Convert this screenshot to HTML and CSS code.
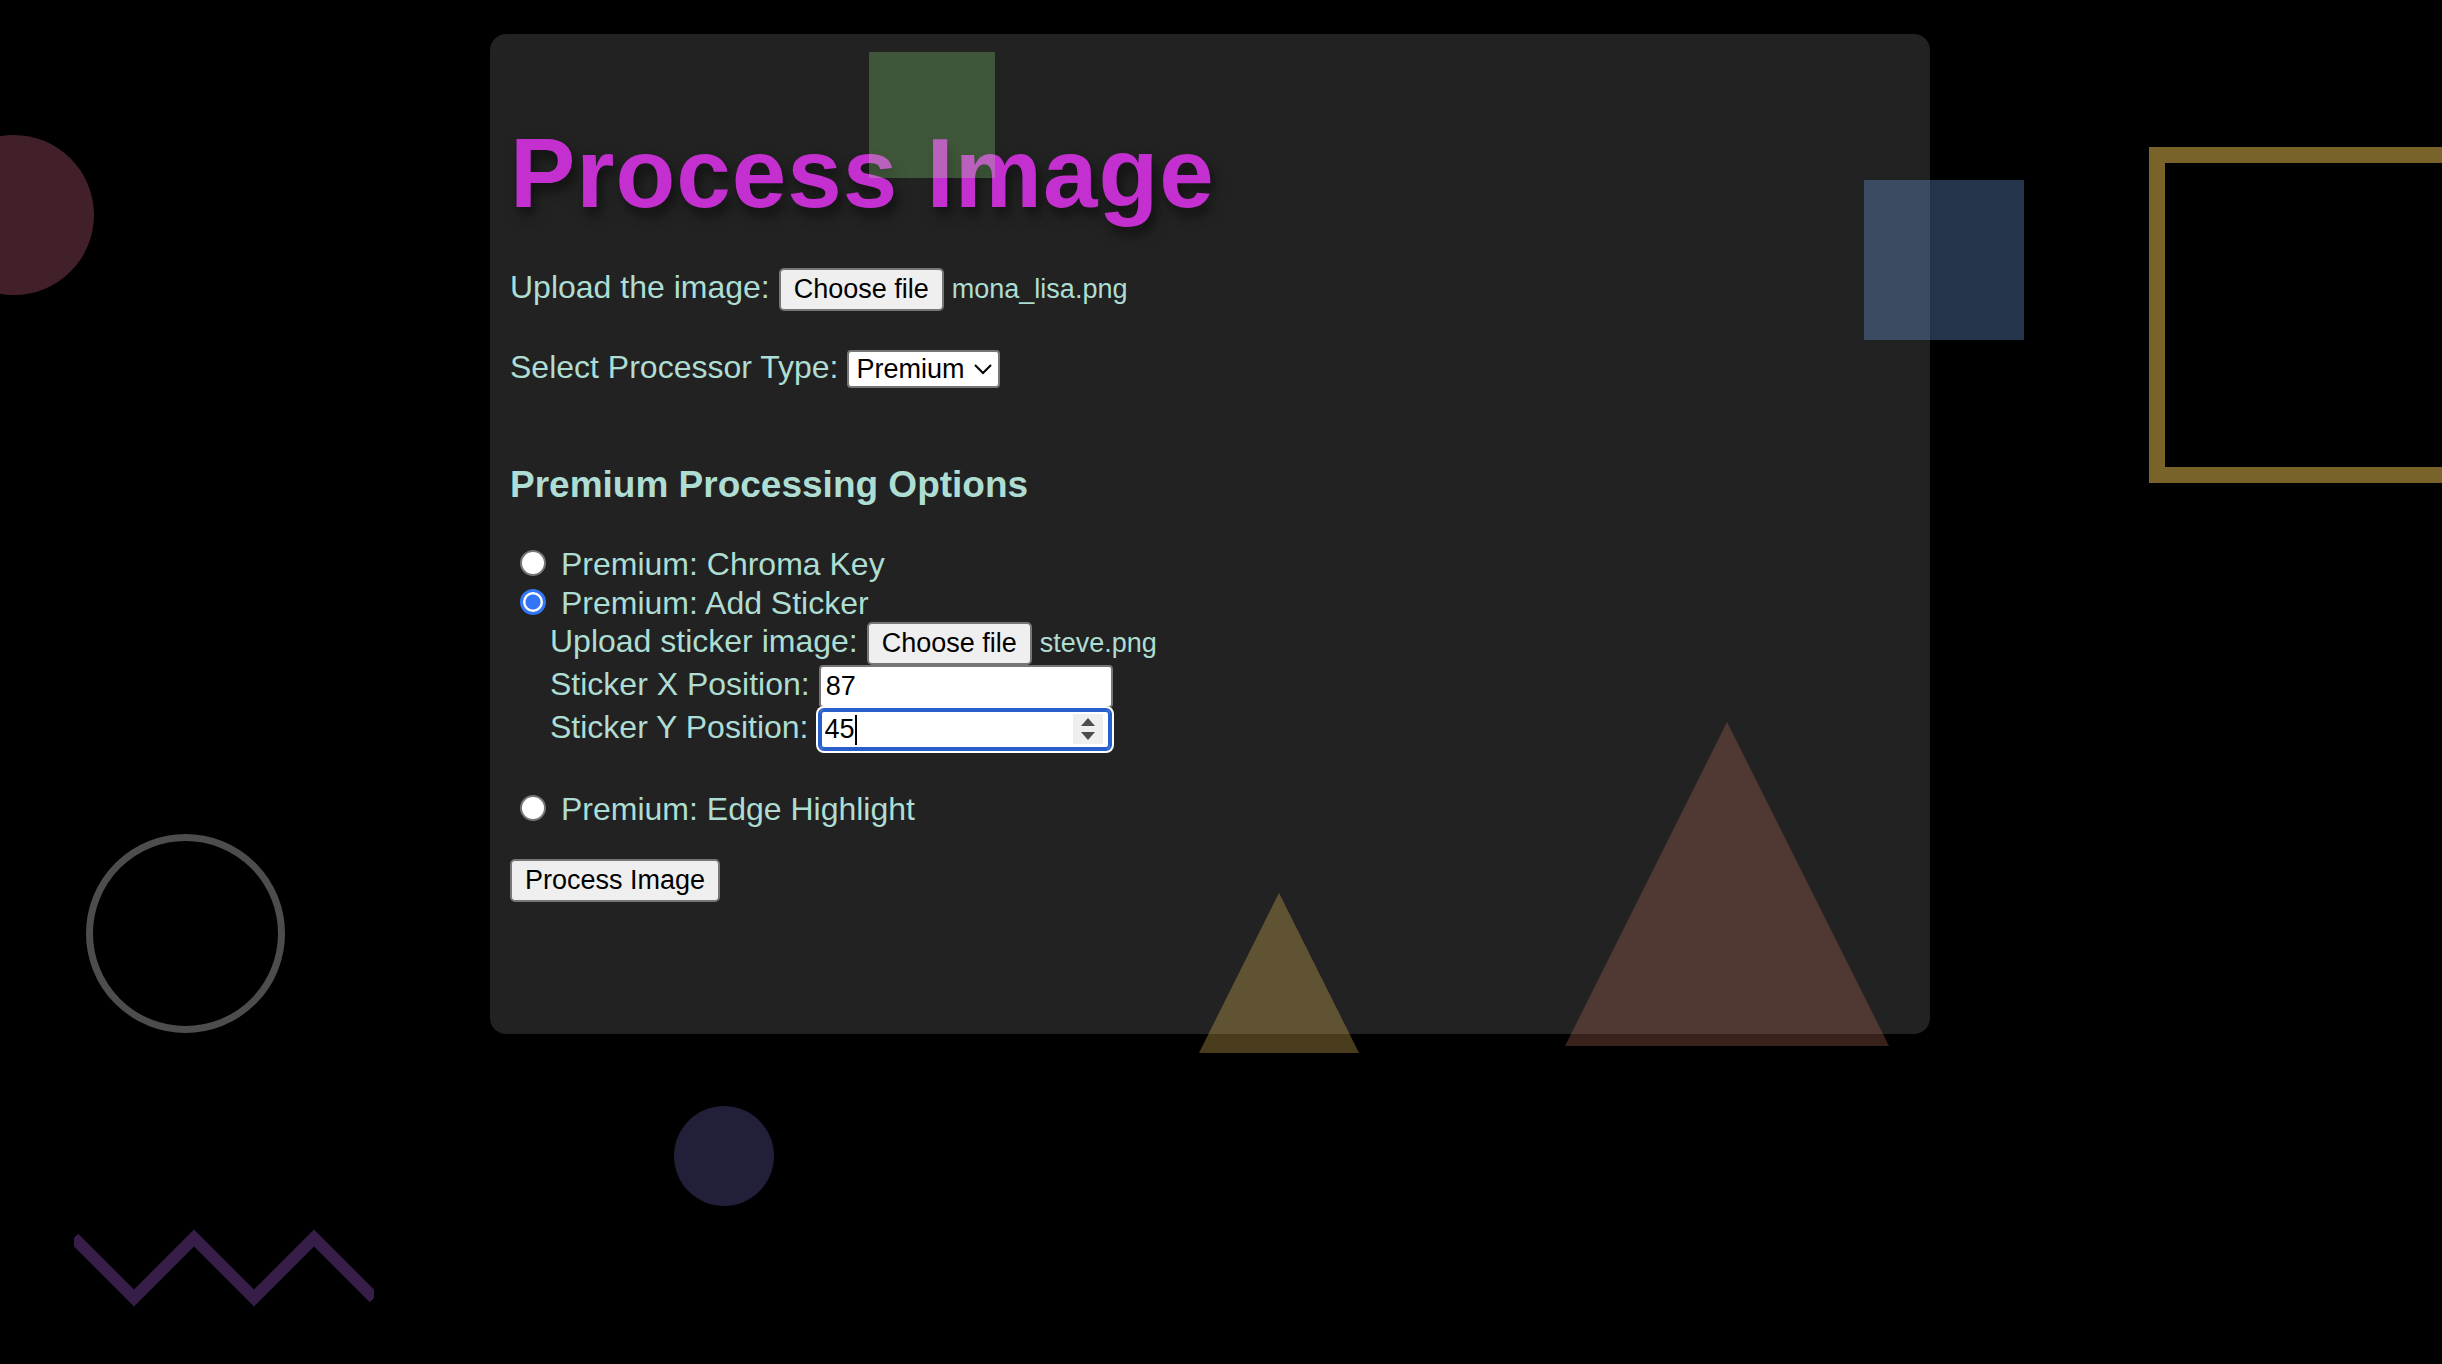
FILE: index.html
```html
<!DOCTYPE html>
<html lang="en-GB">
<head>
  <meta charset="utf-8">
  <title>Process Image</title>
  <meta name="viewport" content="width=device-width, initial-scale=1">
  <link rel="stylesheet" href="styles.css">
</head>
<body>
  <main class="card">
    <h1 class="title">Process Image</h1>
    <form class="form">
      <div class="row row-upload">
        <label for="image">Upload the image:</label>
        <span class="file">
          <span class="button">Choose file</span>
          <span class="file-name">mona_lisa.png</span>
          <input class="file-input" type="file" id="image" name="image" accept="image/*">
        </span>
      </div>

      <div class="row row-type">
        <label for="type">Select Processor Type:</label>
        <select class="select" id="type" name="type">
          <option>Basic</option>
          <option selected>Premium</option>
        </select>
      </div>

      <h3 class="subtitle">Premium Processing Options</h3>

      <div class="option">
        <input class="radio" type="radio" id="chroma" name="option">
        <label for="chroma">Premium: Chroma Key</label>
      </div>
      <div class="option">
        <input class="radio" type="radio" id="sticker" name="option" checked>
        <label for="sticker">Premium: Add Sticker</label>
      </div>

      <div class="sticker">
        <div class="row">
          <label for="sticker-image">Upload sticker image:</label>
          <span class="file">
            <span class="button">Choose file</span>
            <span class="file-name">steve.png</span>
            <input class="file-input" type="file" id="sticker-image" name="sticker-image" accept="image/*">
          </span>
        </div>
        <div class="row">
          <label for="sticker-x">Sticker X Position:</label>
          <input class="number" type="number" id="sticker-x" name="sticker-x" value="87">
        </div>
        <div class="row">
          <label for="sticker-y">Sticker Y Position:</label>
          <input class="number number-active" type="number" id="sticker-y" name="sticker-y" value="45">
        </div>
      </div>

      <div class="option">
        <input class="radio" type="radio" id="edge" name="option">
        <label for="edge">Premium: Edge Highlight</label>
      </div>

      <button class="button submit" type="submit">Process Image</button>
    </form>
  </main>

  <div class="shapes" aria-hidden="true">
    <div class="shape circle-red"></div>
    <div class="shape ring"></div>
    <div class="shape circle-indigo"></div>
    <div class="shape square-green"></div>
    <div class="shape square-blue"></div>
    <div class="shape frame-gold"></div>
    <div class="shape triangle-yellow"></div>
    <div class="shape triangle-red"></div>
    <svg class="shape zigzag" viewBox="0 0 300 80">
      <polyline points="0,10 60,70 120,10 180,70 240,10 300,70" fill="none" stroke="#361e48" stroke-width="12"/>
    </svg>
  </div>
</body>
</html>
```

FILE: styles.css
```css
* {
  box-sizing: border-box;
}

body {
  position: relative;
  min-height: 100vh;
  margin: 0;
  padding: 34px 32px 34px 10px;
  background: #000;
  color: #aeddd3;
  font-family: "Liberation Sans", Arial, Helvetica, sans-serif;
  font-size: 32px;
  line-height: 38px;
}

.card {
  max-width: 1440px;
  margin: 0 auto;
  padding: 84px 20px 132px;
  border-radius: 16px;
  background: #222;
}

.title {
  margin: 0 0 40px;
  color: #c430d0;
  font-size: 98px;
  line-height: 110px;
  letter-spacing: 1px;
  text-shadow: 4px 8px 12px rgba(0, 0, 0, 0.5);
}

.form {
  display: flex;
  flex-direction: column;
  align-items: flex-start;
}

.row {
  display: flex;
  align-items: baseline;
  gap: 9px;
  height: 43px;
}

.row-upload {
  margin-bottom: 37px;
}

.row-type {
  height: 38px;
}

/* File picker: the real input covers the button and the name */
.file {
  position: relative;
  display: flex;
  align-items: baseline;
  gap: 8px;
}

.file-input {
  position: absolute;
  inset: 0;
  width: 100%;
  opacity: 0;
}

.file-name {
  font-size: 27px;
}

.button {
  height: 43px;
  padding: 0 13px;
  border: 2px solid #767676;
  border-radius: 5px;
  background: #efefef;
  color: #000;
  font-family: inherit;
  font-size: 27px;
  line-height: 39px;
}

.select {
  width: 153px;
  height: 38px;
  padding: 0 7px;
  border: 2px solid #767676;
  border-radius: 4px;
  appearance: none;
  background: #fff url("data:image/svg+xml,%3Csvg xmlns='http://www.w3.org/2000/svg' width='18' height='11'%3E%3Cpath d='M1 1l8 8 8-8' fill='none' stroke='%23000' stroke-width='2'/%3E%3C/svg%3E") no-repeat right 6px center;
  color: #000;
  font-family: inherit;
  font-size: 27px;
  line-height: 34px;
}

.subtitle {
  margin: 78px 0 38px;
  font-size: 37px;
  line-height: 42px;
}

.option {
  display: flex;
  align-items: center;
  gap: 15px;
  height: 39px;
  padding-left: 10px;
}

.radio {
  width: 26px;
  height: 26px;
  margin: 0 0 2px;
  border: 2px solid #767676;
  border-radius: 50%;
  appearance: none;
  background: #fff;
}

.radio:checked {
  border: 3px solid #3275f6;
  background: radial-gradient(circle, #3275f6 7px, #fff 8px);
}

.sticker {
  margin-bottom: 38px;
  padding-left: 40px;
}

.number {
  width: 294px;
  height: 43px;
  padding: 0 5px;
  border: 2px solid #767676;
  border-radius: 4px;
  background: #fff;
  color: #000;
  font-family: inherit;
  font-size: 27px;
}

.number::-webkit-inner-spin-button {
  width: 30px;
  height: 30px;
  margin: 0 2px 0 0;
  appearance: none;
  opacity: 0;
}

.number-active {
  border-color: #265fcb;
  border-radius: 6px;
  outline: none;
  box-shadow: inset 0 0 0 2px #265fcb, 0 0 0 2px #fff;
  /* text cursor after the second digit */
  background: #fff linear-gradient(#000, #000) no-repeat 35px center / 2px 30px;
  caret-color: transparent;
}

.number-active::-webkit-inner-spin-button {
  opacity: 1;
  background: #efefef url("data:image/svg+xml,%3Csvg xmlns='http://www.w3.org/2000/svg' width='14' height='22'%3E%3Cpath d='M0 8l7-8 7 8zM0 14l7 8 7-8z' fill='%234d4d4d'/%3E%3C/svg%3E") no-repeat center;
}

.submit {
  margin-top: 31px;
}

/* Decorative shapes, drawn over the card */
.shapes {
  position: absolute;
  inset: 0;
  overflow: hidden;
  pointer-events: none;
}

.shape {
  position: absolute;
}

.circle-red {
  left: -66px;
  top: 135px;
  width: 160px;
  height: 160px;
  border-radius: 50%;
  background: #42202a;
}

.ring {
  left: 86px;
  top: 834px;
  width: 199px;
  height: 199px;
  border: 7px solid #4d4d4d;
  border-radius: 50%;
}

.circle-indigo {
  left: 674px;
  top: 1106px;
  width: 100px;
  height: 100px;
  border-radius: 50%;
  background: #211f3a;
}

.square-green {
  left: 869px;
  top: 52px;
  width: 126px;
  height: 126px;
  background: rgba(154, 242, 130, 0.25);
}

.square-blue {
  right: 418px;
  top: 180px;
  width: 160px;
  height: 160px;
  background: rgba(120, 173, 250, 0.3);
}

.frame-gold {
  right: -43px;
  top: 147px;
  width: 336px;
  height: 336px;
  border: 16px solid #78642b;
}

.triangle-yellow {
  left: 1199px;
  top: 893px;
  width: 160px;
  height: 160px;
  background: rgba(240, 200, 93, 0.3);
  clip-path: polygon(50% 0, 100% 100%, 0 100%);
}

.triangle-red {
  left: 1565px;
  top: 722px;
  width: 324px;
  height: 324px;
  background: rgba(190, 108, 92, 0.3);
  clip-path: polygon(50% 0, 100% 100%, 0 100%);
}

.zigzag {
  left: 74px;
  top: 1228px;
  width: 300px;
  height: 80px;
}
```
